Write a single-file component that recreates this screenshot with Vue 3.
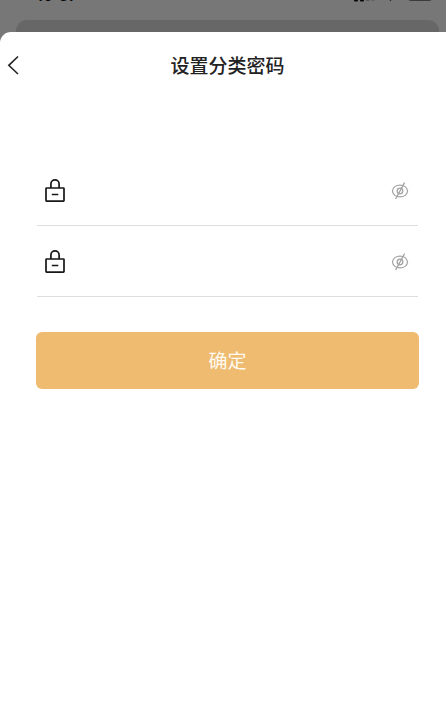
<script setup>

import { ref } from "vue"


const fields=ref([

{ id:1, value:"", visible:false },

{ id:2, value:"", visible:false }

])


function toggle(field){

field.visible=!field.visible

}

</script>


<template>

<div class="page">

<!-- 状态栏 -->

<div class="status">

<span class="time">10:37</span>

<svg class="signal" width="80" height="4" viewBox="0 0 80 4">
<rect x="0" y="-6" width="4" height="7.4" rx="1" fill="#080808"/>
<rect x="6" y="-6" width="4" height="7.4" rx="1" fill="#080808"/>
<rect x="12" y="-6" width="3.5" height="7" rx="1" fill="#555"/>
<rect x="17" y="-6" width="3.5" height="7" rx="1" fill="#606060"/>
<path d="M34 -2h5L36.500 1.300z" fill="#222"/>
<rect x="54" y="-9" width="24" height="10" rx="3" fill="#3b3b3b"/>
</svg>

</div>

<div class="behind"></div>


<div class="sheet">

<header>

<button class="back" aria-label="返回">
<svg width="12" height="20" viewBox="0 0 12 20">
<path d="M11 1.500L1.800 10.300L11 19" fill="none" stroke="#242424" stroke-width="1.6"/>
</svg>
</button>

<h1>设置分类密码</h1>

</header>


<form @submit.prevent>

<div
v-for="field in fields"
:key="field.id"
class="field"
>

<svg class="lock" width="20" height="24" viewBox="0 0 20 24">
<rect x="1" y="9" width="18" height="13.200" rx=".6" fill="none" stroke="#171717" stroke-width="1.700"/>
<path d="M5.900 9V5a4.100 4.100 0 0 1 8.200 0V9M6.800 15.500h6.500" fill="none" stroke="#171717" stroke-width="1.700"/>
</svg>

<input
v-model="field.value"
:type="field.visible?'text':'password'"
/>

<button
type="button"
class="eye"
@click="toggle(field)"
>
<svg width="18" height="18" viewBox="0 0 18 18">
<g fill="none" stroke="#a3a3a3" stroke-width="1.300">
<path d="M1.400 9C1.900 5.500 5 3.100 9 3.100S16.100 5.500 16.600 9C16.100 12.500 13 14.900 9 14.900S1.900 12.500 1.400 9z"/>
<circle cx="9" cy="9" r="2.800"/>
<path d="M13.600 .6L4.600 17"/>
</g>
</svg>
</button>

</div>


<button class="submit">确定</button>

</form>

</div>

</div>

</template>


<style>

body{

background:#fff;

}

</style>


<style scoped>

.page{

height:722px;

overflow:hidden;

background:#777;

font-family:"Liberation Sans","Noto Sans CJK SC",sans-serif;

}

.status{

display:flex;

justify-content:space-between;

height:20px;

padding:0 12px 0 36px;

overflow:hidden;

}

.time{

margin-top:-15px;

font-family:Inter,sans-serif;

font-size:16px;

line-height:20px;

font-weight:600;

color:#080808;

}

.behind{

height:22px;

margin:0 7px 0 16px;

border-radius:11px 11px 0 0;

background:#676767;

}

.sheet{

position:relative;

height:690px;

margin-top:-10px;

border-radius:11px 0 0 0;

background:#fff;

}

button{

padding:0;

border:none;

background:none;

cursor:pointer;

}

header{

display:grid;

grid-template-columns:40px 1fr 40px;

align-items:center;

height:66px;

}

.back{

display:flex;

padding-left:7px;

}

h1{

margin:0 0 0 9px;

padding-top:4px;

text-align:center;

font-size:19px;

line-height:28px;

font-weight:500;

color:#222;

}

form{

padding:57px 27px 0 36px;

}

.field{

display:flex;

align-items:center;

box-sizing:border-box;

height:71px;

margin:0 1px;

padding:2px 9px 0 8px;

border-bottom:1px solid #dedede;

}

.lock{

flex:none;

}

input{

flex:1;

min-width:0;

height:40px;

margin:0 12px;

padding:0;

border:none;

outline:none;

background:none;

font-size:16px;

}

.eye{

display:flex;

}

.submit{

display:block;

width:100%;

height:57px;

margin-top:35px;

padding-top:3px;

border-radius:6px;

background:#efbb70;

color:#fffaf0;

font-family:inherit;

font-size:19px;

line-height:54px;

}

</style>
